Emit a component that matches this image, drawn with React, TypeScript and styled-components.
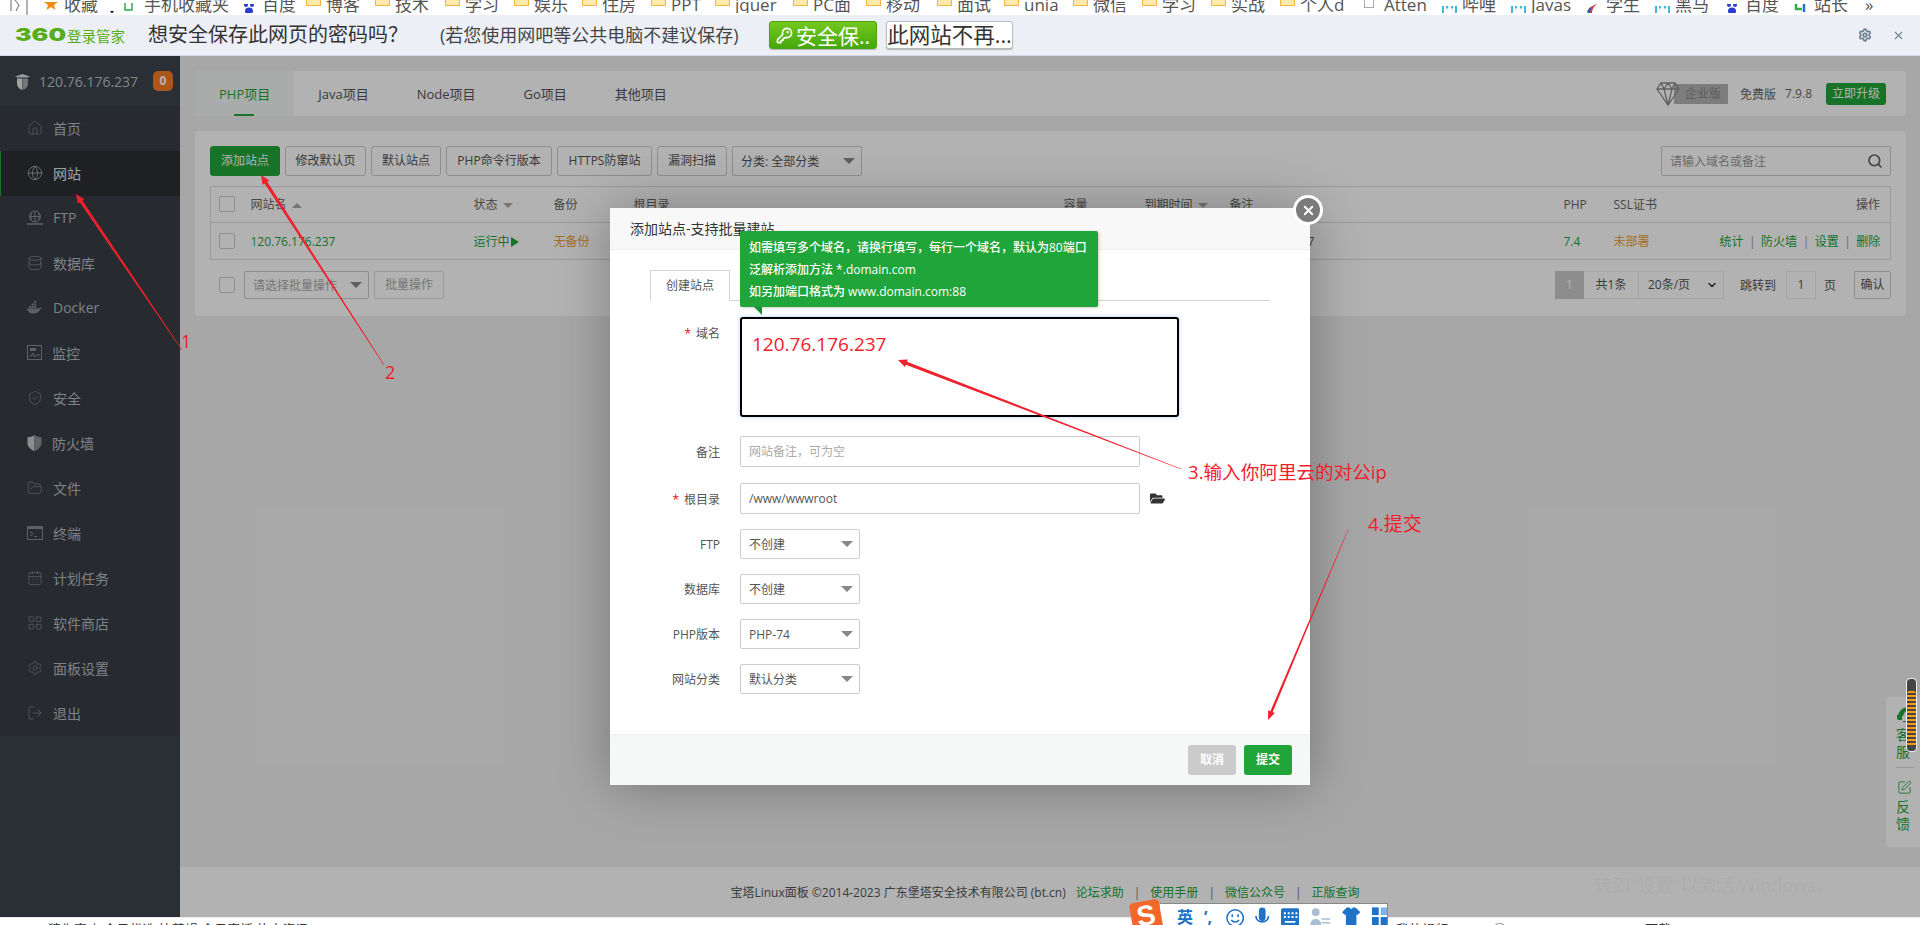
import React from "react";
import styled, { createGlobalStyle } from "styled-components";
import { Home, Globe, Database, ShieldCheck, FolderOpen, CalendarDays, LayoutGrid, Settings, LogOut, Search, X, KeyRound, ChevronDown, SquarePen } from "lucide-react";
import { FaFolderOpen } from "react-icons/fa";

const sans = `"Open Sans","Noto Sans CJK SC",sans-serif`;

const Global = createGlobalStyle`
  html, body { margin: 0; padding: 0; height: 100%; overflow: hidden; background: #fff; }
  body { font-family: ${sans}; font-size: 12px; color: #555; }
  #root { height: 925px; }
  * { box-sizing: border-box; }
`;

const Shell = styled.div`
  position: relative;
  width: 1920px;
  height: 925px;
  overflow: hidden;
  display: flex;
  flex-direction: column;
`;

/* browser chrome */
const Bookmarks = styled.div`
  height: 15px;
  flex: none;
  background: #fff;
  display: flex;
  align-items: flex-start;
  padding-left: 10px;
  overflow: hidden;
`;
const BackMark = styled.svg`
  width: 34px;
  height: 15px;
  flex: none;
`;
const Bookmark = styled.div<{ $w: number }>`
  width: ${(p) => p.$w}px;
  flex: none;
  display: flex;
  align-items: flex-start;
  overflow: hidden;
  white-space: nowrap;
  font-size: 17px;
  line-height: 17px;
  margin-top: -4px;
  color: #555;
`;
const BookmarkSlot = styled.span<{ $w?: number }>`
  width: ${(p) => p.$w ?? 20}px;
  flex: none;
  height: 17px;
  padding-top: 4px;
  display: block;
`;
const FolderGlyph = styled.span`
  display: block;
  width: 15px;
  height: 6px;
  background: #ffe9ad;
  border: 1px solid #f2b53f;
  border-top: none;
  border-radius: 0 0 1px 1px;
`;
const FileGlyph = styled.span`
  display: block;
  width: 10px;
  height: 8px;
  background: #fff;
  border: 1px solid #aaa;
  border-top: none;
`;

const InfoBar = styled.div`
  height: 41px;
  flex: none;
  background: #ecf0f6;
  border-bottom: 1px solid #d3d8e4;
  display: flex;
  align-items: center;
  padding: 0 15px;
  color: #333;
`;
const LogoNum = styled.span`
  font-family: Inter, sans-serif;
  font-weight: 900;
  font-size: 18px;
  line-height: 20px;
  color: #56ad19;
  width: 34px;
  display: inline-block;
  transform: scaleX(1.38);
  transform-origin: left center;
  flex: none;
`;
const LogoName = styled.span`
  margin-left: 18px;
  width: 81px;
  font-size: 14.5px;
  color: #56ad19;
  flex: none;
`;
const SavePrompt = styled.span`
  font-size: 20px;
  line-height: 24px;
  width: 292px;
  flex: none;
  color: #333;
`;
const SaveHint = styled.span`
  font-size: 18px;
  line-height: 24px;
  width: 329px;
  flex: none;
  color: #444;
  white-space: nowrap;
`;
const SaveButton = styled.div`
  width: 108px;
  height: 28px;
  flex: none;
  border-radius: 3px;
  background: linear-gradient(#74c81f, #45a80a);
  border: 1px solid #4da312;
  box-shadow: 0 1px 1px rgba(0, 0, 0, 0.25);
  color: #fff;
  font-size: 21px;
  display: flex;
  align-items: center;
  gap: 3px;
  padding-left: 6px;
  white-space: nowrap;
  overflow: hidden;
`;
const NeverButton = styled.div`
  margin-left: 9px;
  width: 127px;
  height: 28px;
  flex: none;
  border-radius: 3px;
  background: #fff;
  border: 1px solid #bbb;
  box-shadow: 0 1px 1px rgba(0, 0, 0, 0.25);
  color: #333;
  font-size: 21.5px;
  line-height: 25px;
  text-align: center;
  white-space: nowrap;
  overflow: hidden;
`;
const InfoTools = styled.div`
  margin-left: auto;
  display: flex;
  align-items: center;
  gap: 20px;
  color: #6f8092;
  padding-right: 0;
`;

/* page */
const Page = styled.div`
  position: relative;
  flex: 1;
  display: flex;
  min-height: 0;
`;
const Shade = styled.div`
  position: absolute;
  inset: 0;
  background: rgba(0, 0, 0, 0.3);
  z-index: 10;
`;
const Sidebar = styled.aside`
  width: 180px;
  flex: none;
  background: #3c444d;
  display: flex;
  flex-direction: column;
`;
const SideHead = styled.div`
  height: 50px;
  display: flex;
  align-items: center;
  padding-left: 14px;
  color: #b5c0c9;
  font-size: 14px;
`;
const HeadIp = styled.span`
  margin-left: 8px;
  width: 114px;
  flex: none;
`;
const Badge = styled.span`
  width: 20px;
  height: 20px;
  border-radius: 5px;
  background: #f77b25;
  color: #fff;
  font-size: 12px;
  font-weight: 700;
  line-height: 20px;
  text-align: center;
`;
const SideNav = styled.nav`
  background: #383e46;
  display: flex;
  flex-direction: column;
`;
const NavItem = styled.div<{ $active?: boolean }>`
  height: 45px;
  display: flex;
  align-items: center;
  padding: 0 0 2px 27px;
  gap: 10px;
  font-size: 14px;
  color: ${(p) => (p.$active ? "#e3e6e8" : "#b4bac0")};
  background: ${(p) => (p.$active ? "#2b2f34" : "transparent")};
  box-shadow: ${(p) => (p.$active ? "inset 1px 0 0 #20a53a" : "none")};
  svg { color: ${(p) => (p.$active ? "#b8bcc0" : "#868b90")}; flex: none; }
`;

const Main = styled.main`
  flex: 1;
  min-width: 0;
  background: #f0f0f0;
  display: flex;
  flex-direction: column;
  padding-top: 15px;
`;
const TabsCard = styled.div`
  margin: 0 14px 15px 15px;
  height: 45px;
  background: #fff;
  border-radius: 4px;
  display: flex;
  align-items: stretch;
  overflow: hidden;
  font-size: 13px;
  color: #555;
`;
const TopTab = styled.div<{ $active?: boolean }>`
  position: relative;
  padding: 0 24px;
  display: flex;
  align-items: center;
  color: ${(p) => (p.$active ? "#20a53a" : "#555")};
  background: ${(p) => (p.$active ? "#f3f7f4" : "transparent")};
  &::after {
    content: "";
    display: ${(p) => (p.$active ? "block" : "none")};
    position: absolute;
    left: 39px;
    bottom: 0;
    width: 20px;
    height: 2px;
    background: #20a53a;
  }
`;
const Edition = styled.div`
  margin-left: auto;
  display: flex;
  align-items: center;
  font-size: 12px;
  padding-right: 20px;
  color: #666;
`;
const Diamond = styled.svg`
  width: 24px;
  height: 26px;
  margin-right: -6px;
  z-index: 1;
`;
const EditionTag = styled.span`
  width: 54px;
  height: 20px;
  background: #b4b4b4;
  color: #848484;
  line-height: 20px;
  text-align: center;
  padding-left: 4px;
  margin-right: 12px;
`;
const Version = styled.span`
  margin-left: 9px;
  margin-right: 14px;
`;
const Upgrade = styled.span`
  width: 60px;
  height: 22px;
  border-radius: 3px;
  background: #20a53a;
  color: #fff;
  line-height: 22px;
  text-align: center;
`;

const Card = styled.section`
  margin: 0 14px 0 15px;
  background: #fff;
  border-radius: 4px;
  padding: 15px 15px 17px;
`;
const Toolbar = styled.div`
  display: flex;
  gap: 5px;
  height: 30px;
`;
const Btn = styled.div<{ $w: number; $primary?: boolean }>`
  width: ${(p) => p.$w}px;
  height: 30px;
  border-radius: 3px;
  border: 1px solid ${(p) => (p.$primary ? "#20a53a" : "#ccc")};
  background: ${(p) => (p.$primary ? "#20a53a" : "#fff")};
  color: ${(p) => (p.$primary ? "#fff" : "#555")};
  line-height: 28px;
  text-align: center;
  white-space: nowrap;
`;
const Caret = styled.span<{ $up?: boolean; $size?: number; $color?: string }>`
  display: inline-block;
  width: 0;
  height: 0;
  border-left: ${(p) => p.$size ?? 5}px solid transparent;
  border-right: ${(p) => p.$size ?? 5}px solid transparent;
  ${(p) => (p.$up ? "border-bottom" : "border-top")}: ${(p) => p.$size ?? 5}px solid ${(p) => p.$color ?? "#aaa"};
`;
const SelectBox = styled.div<{ $w: number; $h?: number; $muted?: boolean }>`
  width: ${(p) => p.$w}px;
  height: ${(p) => p.$h ?? 30}px;
  border: 1px solid #ccc;
  border-radius: 2px;
  background: #fff;
  color: ${(p) => (p.$muted ? "#aaa" : "#555")};
  display: flex;
  align-items: center;
  justify-content: space-between;
  padding: 0 6px 0 8px;
  white-space: nowrap;
  flex: none;
  font-size: 12px;
`;
const DarkCaret = styled(Caret).attrs({ $size: 6, $color: "#888" })``;
const SearchBox = styled.div`
  margin-left: auto;
  width: 230px;
  height: 30px;
  border: 1px solid #ccc;
  border-radius: 2px;
  display: flex;
  align-items: center;
  justify-content: space-between;
  padding: 0 7px 0 8px;
  color: #999;
  svg { color: #666; }
`;

const Table = styled.table`
  margin-top: 10px;
  width: 100%;
  table-layout: fixed;
  border-collapse: collapse;
  border: 1px solid #ddd;
  font-size: 12px;
`;
const Th = styled.th<{ $right?: boolean }>`
  height: 36px;
  padding: 0 10px 1px;
  font-weight: 400;
  color: #666;
  text-align: ${(p) => (p.$right ? "right" : "left")};
  border-bottom: 1px solid #ddd;
  white-space: nowrap;
  span { margin-left: 5px; vertical-align: middle; }
`;
const Td = styled.td<{ $tone?: "green" | "orange"; $right?: boolean }>`
  height: 37px;
  padding: 0 10px;
  white-space: nowrap;
  text-align: ${(p) => (p.$right ? "right" : "left")};
  color: ${(p) => (p.$tone === "green" ? "#20a53a" : p.$tone === "orange" ? "#ee9d35" : "#555")};
`;
const CheckCell = styled.div`
  width: 16px;
  height: 16px;
  margin-left: -2px;
  border: 1px solid #ccc;
  border-radius: 2px;
  background: #fff;
`;
const PlayMark = styled.span`
  display: inline-block;
  margin-left: 1px;
  width: 0;
  height: 0;
  border-top: 5px solid transparent;
  border-bottom: 5px solid transparent;
  border-left: 8px solid #20a53a;
  vertical-align: -1px;
`;
const Sep = styled.i`
  font-style: normal;
  color: #999;
  margin: 0 5.5px;
`;
const ActionLink = styled.span`
  color: #20a53a;
`;
const CardFoot = styled.div`
  margin-top: 11px;
  display: flex;
  align-items: center;
  height: 28px;
`;
const FootCheck = styled.div`
  width: 16px;
  height: 16px;
  margin: 0 9px 0 9px;
  border: 1px solid #ccc;
  border-radius: 2px;
  flex: none;
`;
const GhostBtn = styled.div`
  margin-left: 5px;
  width: 70px;
  height: 28px;
  border: 1px solid #ddd;
  border-radius: 2px;
  color: #aaa;
  line-height: 26px;
  text-align: center;
`;
const Pager = styled.div`
  margin-left: auto;
  display: flex;
  align-items: center;
  height: 28px;
  color: #555;
`;
const PageNum = styled.span`
  width: 29px;
  height: 28px;
  background: #cbcbcb;
  color: #fff;
  text-align: center;
  line-height: 28px;
`;
const PageCell = styled.span<{ $w: number; $spread?: boolean }>`
  width: ${(p) => p.$w}px;
  height: 28px;
  border: 1px solid #eee;
  border-left: none;
  line-height: 26px;
  display: flex;
  align-items: center;
  justify-content: ${(p) => (p.$spread ? "space-between" : "center")};
  padding: ${(p) => (p.$spread ? "0 5px 0 9px" : "0")};
  svg { color: #333; }
`;
const PageText = styled.span<{ $before: number; $after: number }>`
  margin: 0 ${(p) => p.$after}px 0 ${(p) => p.$before}px;
`;
const PageInput = styled.span`
  width: 30px;
  height: 28px;
  border: 1px solid #eee;
  text-align: center;
  line-height: 26px;
`;
const PageConfirm = styled.span`
  margin-left: 18px;
  width: 37px;
  height: 28px;
  border: 1px solid #ccc;
  border-radius: 2px;
  text-align: center;
  line-height: 26px;
`;
const PageFooter = styled.footer`
  margin-top: auto;
  height: 50px;
  background: #fff;
  display: flex;
  align-items: center;
  justify-content: center;
  font-size: 12px;
  color: #555;
  padding-right: 10px;
`;
const FootLink = styled.span`
  color: #20a53a;
  margin-left: 10px;
`;
const FootSep = styled.i`
  font-style: normal;
  color: #777;
  margin-left: 10px;
`;
const FloatPanel = styled.div`
  position: absolute;
  right: 0;
  top: 641px;
  width: 34px;
  height: 150px;
  background: #fff;
  border-radius: 4px 0 0 4px;
  color: #20a53a;
  font-size: 14px;
  line-height: 17px;
  display: flex;
  flex-direction: column;
  align-items: flex-start;
  padding: 9px 0 0 10px;
  svg { margin-left: 1px; }
`;
const FloatWord = styled.span`
  width: 14px;
  margin-top: 3px;
`;
const FloatRule = styled.div`
  width: 18px;
  height: 1px;
  background: #ddd;
  margin: 7px 0 12px 0;
`;

/* modal */
const Modal = styled.div`
  position: absolute;
  left: 610px;
  top: 152px;
  width: 700px;
  height: 577px;
  background: #fff;
  z-index: 20;
  box-shadow: 1px 1px 50px rgba(0, 0, 0, 0.3);
  display: flex;
  flex-direction: column;
`;
const ModalTitle = styled.div`
  height: 42px;
  flex: none;
  background: #f8f8f8;
  border-bottom: 1px solid #eee;
  padding-left: 20px;
  font-size: 14px;
  line-height: 42px;
  color: #333;
`;
const CloseBtn = styled.div`
  position: absolute;
  right: -13px;
  top: -13px;
  width: 30px;
  height: 30px;
  border-radius: 50%;
  background: #7b7b7b;
  border: 3px solid #fff;
  color: #fff;
  display: flex;
  align-items: center;
  justify-content: center;
`;
const TipBox = styled.div`
  position: absolute;
  left: 130px;
  top: 23px;
  width: 358px;
  height: 76px;
  background: #20a53a;
  border-radius: 2px;
  color: #fff;
  font-size: 12px;
  font-weight: 500;
  line-height: 22px;
  padding: 6px 0 0 9px;
  white-space: nowrap;
  box-shadow: 1px 1px 3px rgba(0, 0, 0, 0.2);
  z-index: 2;
  &::after {
    content: "";
    position: absolute;
    left: 14px;
    top: 76px;
    width: 8px;
    height: 8px;
    background: #1c8f33;
    clip-path: polygon(0 0, 100% 0, 100% 100%);
  }
`;
const ModalTabs = styled.div`
  margin: 20px 40px 0;
  height: 31px;
  flex: none;
  border-bottom: 1px solid #d5d3dc;
  display: flex;
`;
const ModalTab = styled.div`
  width: 80px;
  height: 31px;
  border: 1px solid #d5d3dc;
  border-bottom: none;
  background: #fff;
  text-align: center;
  line-height: 30px;
  color: #555;
`;
const Form = styled.div`
  margin-top: 16px;
  display: flex;
  flex-direction: column;
`;
const Row = styled.div<{ $mb?: number; $top?: boolean }>`
  display: flex;
  align-items: ${(p) => (p.$top ? "flex-start" : "center")};
  margin-bottom: ${(p) => p.$mb ?? 15}px;
`;
const Label = styled.label<{ $top?: boolean }>`
  width: 110px;
  flex: none;
  margin-right: 20px;
  text-align: right;
  color: #555;
  white-space: nowrap;
  padding-top: ${(p) => (p.$top ? "7px" : "0")};
`;
const Star = styled.span`
  color: #ef0808;
  margin-right: 5px;
`;
const DomainBox = styled.div`
  width: 439px;
  height: 100px;
  border: 2px solid #000;
  border-radius: 3px;
  box-shadow: 0 0 4px rgba(102, 170, 255, 0.5);
  padding: 12px 10px;
  font-size: 19px;
  line-height: 26px;
  color: #f0202c;
`;
const TextInput = styled.div<{ $muted?: boolean }>`
  width: 400px;
  height: 31px;
  border: 1px solid #ccc;
  border-radius: 2px;
  padding: 0 8px;
  line-height: 29px;
  color: ${(p) => (p.$muted ? "#aaa" : "#555")};
`;
const FolderBtn = styled.span`
  margin-left: 10px;
  color: #333;
  display: flex;
`;
const ModalFoot = styled.div`
  margin-top: auto;
  height: 51px;
  flex: none;
  background: #f6f8f8;
  border-top: 1px solid #eee;
  display: flex;
  align-items: center;
  justify-content: flex-end;
  gap: 8px;
  padding-right: 18px;
`;
const FootBtn = styled.div<{ $primary?: boolean }>`
  width: 48px;
  height: 30px;
  border-radius: 3px;
  background: ${(p) => (p.$primary ? "#20a53a" : "#cbcbcb")};
  color: #fff;
  font-weight: 700;
  line-height: 30px;
  text-align: center;
`;

/* annotations and desktop layers */
const Ink = styled.svg`
  position: absolute;
  left: 0;
  top: 0;
  width: 1920px;
  height: 925px;
  z-index: 30;
  pointer-events: none;
`;
const Note = styled.span<{ $x: number; $y: number; $size?: number }>`
  position: absolute;
  left: ${(p) => p.$x}px;
  top: ${(p) => p.$y}px;
  font-size: ${(p) => p.$size ?? 18}px;
  line-height: 24px;
  color: #f0202c;
  white-space: nowrap;
  z-index: 31;
`;
const VolumePill = styled.div`
  position: absolute;
  left: 1906px;
  top: 678px;
  width: 11px;
  height: 74px;
  border-radius: 4px;
  border: 1px solid #eee;
  z-index: 31;
  background: repeating-linear-gradient(#ff9c14 0 2px, #444 2px 4px);
  background-clip: padding-box;
  box-shadow: inset 0 12px 0 #444, inset 0 -5px 0 #444;
`;
const Watermark = styled.div`
  position: absolute;
  left: 1594px;
  top: 846px;
  z-index: 31;
  white-space: nowrap;
  font-size: 18px;
  line-height: 26px;
`;
const WatermarkTitle = styled.div`
  color: rgba(0, 0, 0, 0.02);
`;
const WatermarkHint = styled.div`
  color: rgba(0, 0, 0, 0.05);
`;
const StatusBar = styled.div`
  height: 8px;
  flex: none;
  background: #fff;
  border-top: 1px solid #eee;
  overflow: hidden;
  display: flex;
  padding: 3px 0 0 48px;
  font-size: 13px;
  line-height: 16px;
  color: #333;
`;
const StatusItem = styled.span<{ $w: number }>`
  width: ${(p) => p.$w}px;
  flex: none;
  white-space: nowrap;
`;
const Sogou = styled.div`
  position: absolute;
  left: 1130px;
  top: 900px;
  width: 258px;
  height: 25px;
  z-index: 32;
  display: flex;
`;
const SogouBar = styled.div`
  position: absolute;
  left: 30px;
  top: 3px;
  width: 228px;
  height: 22px;
  background: #fff;
  border: 1px solid #888;
  border-bottom: none;
  border-left: none;
  display: flex;
  align-items: flex-start;
  padding: 3px 0 0 17px;
  color: #1e73c8;
  gap: 11px;
`;
const SogouWord = styled.span<{ $pad?: number }>`
  font-size: 16px;
  line-height: 20px;
  font-weight: 700;
  color: #1e73c8;
  padding-right: ${(p) => p.$pad ?? 0}px;
`;
const SogouLogo = styled.div`
  position: absolute;
  left: 1px;
  top: 1px;
  width: 30px;
  height: 29px;
  background: #f4672a;
  border-radius: 4px;
  transform: rotate(-10deg);
  color: #fff;
  font-family: "Liberation Sans", sans-serif;
  font-weight: 700;
  font-size: 28px;
  line-height: 29px;
  text-align: center;
  z-index: 1;
`;

/* drawings */
const FtpIcon = () => (
  <svg width="16" height="16" viewBox="0 0 16 16" fill="none" stroke="currentColor" strokeWidth="1">
    <circle cx="8" cy="6.5" r="5.5" />
    <path d="M2.5 6.5h11M8 1v11M4.8 2.4c-1.2 2.4-1.2 5.8 0 8.2M11.2 2.4c1.2 2.4 1.2 5.8 0 8.2" />
    <path d="M0 14h16M6 14h4" strokeWidth="1.4" />
  </svg>
);
const DockerIcon = () => (
  <svg width="16" height="16" viewBox="0 0 16 16" fill="currentColor">
    <path d="M0 8.5h12c.6-1 1.8-1.3 3-.9-.4 1-1 1.5-2 1.6-1 3-3.600 4.300-6.600 4.300C2.500 13.500.4 11.500 0 8.500z" />
    <path d="M2 6h2v2H2zM4.600 6h2v2h-2zM7.200 6h2v2h-2zM4.600 3.400h2v2h-2zM7.200 3.400h2v2h-2zM7.200.8h2v2h-2z" />
  </svg>
);
const MonitorIcon = () => (
  <svg width="15" height="15" viewBox="0 0 15 15" fill="none" stroke="currentColor" strokeWidth="1">
    <rect x=".5" y=".5" width="14" height="14" />
    <path d="M2 11h2.500l1.500-3 1.500 4 1.500-2h4" />
    <rect x="3" y="3" width="6" height="3" fill="currentColor" stroke="none" />
  </svg>
);
const HalfShield = () => (
  <svg width="15" height="16" viewBox="0 0 15 16">
    <path d="M7.500 0C5.500 1.500 3 2.200.5 2.200v6c0 3.500 3 6.200 7 7.800z" fill="#c8cbcd" />
    <path d="M7.500 0c2 1.500 4.500 2.200 7 2.200v6c0 3.500-3 6.200-7 7.800z" fill="#8b8f92" />
  </svg>
);
const TerminalIcon = () => (
  <svg width="16" height="14" viewBox="0 0 16 14" fill="none" stroke="currentColor">
    <rect x=".5" y=".5" width="15" height="13" />
    <rect x="1" y="1" width="14" height="2" fill="currentColor" stroke="none" />
    <path d="M3 5.500l3 2.200-3 2.200M7 10.500h3" />
  </svg>
);
const TowerIcon = () => (
  <svg width="17" height="18" viewBox="0 0 17 18">
    <path d="M8.500 0v2L1 4.500l2.500 1h10l2.500-1L8.500 2z" fill="#d9dde0" />
    <path d="M3 6.500h5.300V18C5 17 3 14.500 3 11.500z" fill="#e6e8ea" />
    <path d="M8.700 6.500H14v5c0 3-2 5.500-5.300 6.500z" fill="#a4a9ad" />
  </svg>
);
const Star5 = () => (
  <svg width="14" height="13" viewBox="0 0 14 13" fill="#f08a12"><path d="M7-6l2 6h5l-4 3 1.500 5L7 5 2.500 8 4 3 0 0h5z" /></svg>
);
const TickGlyph = () => (
  <svg width="4" height="8" viewBox="0 0 4 8" fill="#222"><path d="M0 4h4L2 7z" /></svg>
);
const PhoneGlyph = () => (
  <svg width="10" height="12" viewBox="0 0 10 12" fill="none" stroke="#2faa4d" strokeWidth="1.500"><path d="M1-4v11h7V-4" /></svg>
);
const PawGlyph = () => (
  <svg width="14" height="11" viewBox="0 0 14 11" fill="#2b3bd0"><circle cx="4" cy="1" r="2" /><circle cx="10" cy="1" r="2" /><ellipse cx="7" cy="7" rx="4" ry="3.500" /></svg>
);
const BiliGlyph = () => (
  <svg width="15" height="9" viewBox="0 0 15 9" fill="none" stroke="#00a1d6" strokeWidth="1.500"><path d="M1-3v9.500c0 .8.500 1.500 1.500 1.500h10c1 0 1.500-.7 1.500-1.500V-3" /><path d="M5 0v2.500M10 0v2.500" /></svg>
);
const XueGlyph = () => (
  <svg width="12" height="11" viewBox="0 0 12 11"><path d="M3 10C3 5 6 1 11 0 7 3 6 6 6 10z" fill="#d43b3b" /><path d="M1 8c1-3 3-5 5-6-1 2-2 5-2 8z" fill="#2b55b8" /></svg>
);
const ZhanGlyph = () => (
  <svg width="13" height="11" viewBox="0 0 13 11" fill="none" strokeWidth="2.500"><path d="M2-2v7h6" stroke="#2faa4d" /><path d="M10-2v10" stroke="#2b6fd0" /></svg>
);
const DiamondIcon = () => (
  <Diamond viewBox="0 0 24 26" fill="none" stroke="#8c8c8c" strokeWidth="1.300">
    <path d="M5 2h14l4 6-11 16L1 8zM1 8h22M8 8l4 16 4-16M5 2l3 6 4-6 4 6 3-6" />
  </Diamond>
);
const HeadsetIcon = () => (
  <svg width="18" height="17" viewBox="0 0 18 17" fill="currentColor">
    <path d="M1 11C1 5 6 1 12 1c2 0 4 .5 5 1.500C12 2 7 5 6 10z" />
    <path d="M0 9h5v5H2c-1 0-2-1-2-2zM6 15h8v1H6z" />
  </svg>
);
const SmileGlyph = () => (
  <svg width="19" height="22" viewBox="0 0 19 22" fill="none" stroke="currentColor" strokeWidth="1.600"><circle cx="9.500" cy="11" r="8.500" /><path d="M6.500 7v3M12.500 7v3M5.500 13c2 3 6 3 8 0" /></svg>
);
const MicGlyph = () => (
  <svg width="15" height="22" viewBox="0 0 15 22" fill="currentColor"><rect x="4" y="0" width="7" height="14" rx="3.500" /><path d="M1 9c0 8 13 8 13 0" fill="none" stroke="currentColor" strokeWidth="1.800" /></svg>
);
const KeysGlyph = () => (
  <svg width="19" height="22" viewBox="0 0 19 22" fill="currentColor"><rect y="1" width="19" height="20" rx="2" /><path d="M3 5h2v2H3zM7 5h2v2H7zM11 5h2v2h-2zM15 5h2v2h-2zM3 9h2v2H3zM7 9h2v2H7zM11 9h2v2h-2zM15 9h2v2h-2zM4 14h11v2H4z" fill="#fff" /></svg>
);
const PersonGlyph = () => (
  <svg width="22" height="22" viewBox="0 0 22 22"><circle cx="6" cy="5" r="4" fill="#a9bdd3" /><path d="M0 22c0-7 2-10 6-10s6 3 6 10z" fill="#a9bdd3" /><path d="M12 12h9M12 16h9M12 20h9" stroke="#a9bdd3" strokeWidth="1.500" /></svg>
);
const ShirtGlyph = () => (
  <svg width="19" height="22" viewBox="0 0 19 22" fill="currentColor"><path d="M5 0h3c0 2 3 2 3 0h3l5 5-3 3-1-1v15H4V7L3 8 0 5z" /></svg>
);
const GridGlyph = () => (
  <svg width="16" height="22" viewBox="0 0 16 22" fill="currentColor"><rect width="7" height="8" /><rect x="9" width="7" height="8" fill="#7fb2e6" /><rect y="10" width="7" height="12" /><rect x="9" y="10" width="7" height="12" /></svg>
);

function Arrow({ a, b, w = 3.2 }: { a: [number, number]; b: [number, number]; w?: number }) {
  const dx = b[0] - a[0];
  const dy = b[1] - a[1];
  const len = Math.hypot(dx, dy);
  const ux = dx / len;
  const uy = dy / len;
  const nx = -uy;
  const ny = ux;
  const headLen = 9;
  const neck: [number, number] = [b[0] - ux * headLen, b[1] - uy * headLen];
  const p = (x: number, y: number, s: number) => `${x + nx * s},${y + ny * s}`;
  const points = [
    p(a[0], a[1], 0.25),
    p(neck[0], neck[1], w / 2),
    p(neck[0], neck[1], w / 2 + 2.4),
    `${b[0]},${b[1]}`,
    p(neck[0], neck[1], -(w / 2 + 2.4)),
    p(neck[0], neck[1], -w / 2),
    p(a[0], a[1], -0.25),
  ].join(" ");
  return <polygon points={points} fill="#f0202c" />;
}

type Mark = "star" | "tick" | "phone" | "paw" | "folder" | "file" | "bili" | "xue" | "zhan" | "none";
const marks: Record<Mark, React.ReactNode> = {
  star: <Star5 />,
  tick: <TickGlyph />,
  phone: <PhoneGlyph />,
  paw: <PawGlyph />,
  folder: <FolderGlyph />,
  file: <FileGlyph />,
  bili: <BiliGlyph />,
  xue: <XueGlyph />,
  zhan: <ZhanGlyph />,
  none: null,
};
const bookmarks: { x: number; mark: Mark; label: string }[] = [
  { x: 44, mark: "star", label: "收藏" },
  { x: 110, mark: "tick", label: "" },
  { x: 124, mark: "phone", label: "手机收藏夹" },
  { x: 242, mark: "paw", label: "百度" },
  { x: 306, mark: "folder", label: "博客" },
  { x: 375, mark: "folder", label: "技术" },
  { x: 445, mark: "folder", label: "学习" },
  { x: 514, mark: "folder", label: "娱乐" },
  { x: 582, mark: "folder", label: "住房" },
  { x: 651, mark: "folder", label: "PPT" },
  { x: 715, mark: "folder", label: "jquer" },
  { x: 793, mark: "folder", label: "PC面" },
  { x: 866, mark: "folder", label: "移动" },
  { x: 937, mark: "folder", label: "面试" },
  { x: 1004, mark: "folder", label: "unia" },
  { x: 1073, mark: "folder", label: "微信" },
  { x: 1142, mark: "folder", label: "学习" },
  { x: 1211, mark: "folder", label: "实战" },
  { x: 1280, mark: "folder", label: "个人d" },
  { x: 1364, mark: "file", label: "Atten" },
  { x: 1442, mark: "bili", label: "哔哩" },
  { x: 1511, mark: "bili", label: "Javas" },
  { x: 1586, mark: "xue", label: "学生" },
  { x: 1655, mark: "bili", label: "黑马" },
  { x: 1725, mark: "paw", label: "百度" },
  { x: 1794, mark: "zhan", label: "站长" },
  { x: 1865, mark: "none", label: "»" },
];

const navs: { label: string; icon: React.ReactNode; active?: boolean }[] = [
  { label: "首页", icon: <Home size={16} strokeWidth={1} /> },
  { label: "网站", icon: <Globe size={16} strokeWidth={1.1} />, active: true },
  { label: "FTP", icon: <FtpIcon /> },
  { label: "数据库", icon: <Database size={16} strokeWidth={1.2} /> },
  { label: "Docker", icon: <DockerIcon /> },
  { label: "监控", icon: <MonitorIcon /> },
  { label: "安全", icon: <ShieldCheck size={16} strokeWidth={1.1} /> },
  { label: "防火墙", icon: <HalfShield /> },
  { label: "文件", icon: <FolderOpen size={16} strokeWidth={1.1} /> },
  { label: "终端", icon: <TerminalIcon /> },
  { label: "计划任务", icon: <CalendarDays size={16} strokeWidth={1.1} /> },
  { label: "软件商店", icon: <LayoutGrid size={16} strokeWidth={1.1} /> },
  { label: "面板设置", icon: <Settings size={16} strokeWidth={1} /> },
  { label: "退出", icon: <LogOut size={16} strokeWidth={1.1} /> },
];

const tools: { label: string; w: number; primary?: boolean }[] = [
  { label: "添加站点", w: 70, primary: true },
  { label: "修改默认页", w: 81 },
  { label: "默认站点", w: 70 },
  { label: "PHP命令行版本", w: 106 },
  { label: "HTTPS防窜站", w: 95 },
  { label: "漏洞扫描", w: 70 },
];

export default function App() {
  return (
    <Shell>
      <Global />
      <Bookmarks>
        <BackMark viewBox="0 0 34 15" fill="none" stroke="#666">
          <path d="M1 0v11M5 0l4 5-3 6M17 0v15" />
        </BackMark>
        {bookmarks.map((b, i) => {
          const next = i + 1 < bookmarks.length ? bookmarks[i + 1].x : 1910;
          return (
            <Bookmark key={b.x} $w={next - b.x}>
              {b.mark !== "none" && <BookmarkSlot $w={b.mark === "tick" ? 8 : 20}>{marks[b.mark]}</BookmarkSlot>}
              {b.label}
            </Bookmark>
          );
        })}
      </Bookmarks>
      <InfoBar>
        <LogoNum>360</LogoNum>
        <LogoName>登录管家</LogoName>
        <SavePrompt>想安全保存此网页的密码吗？</SavePrompt>
        <SaveHint>(若您使用网吧等公共电脑不建议保存)</SaveHint>
        <SaveButton>
          <KeyRound size={17} strokeWidth={2.4} />
          安全保..
        </SaveButton>
        <NeverButton>此网站不再...</NeverButton>
        <InfoTools>
          <Settings size={14} strokeWidth={3} />
          <X size={13} strokeWidth={2} />
        </InfoTools>
      </InfoBar>
      <Page>
        <Sidebar>
          <SideHead>
            <TowerIcon />
            <HeadIp>120.76.176.237</HeadIp>
            <Badge>0</Badge>
          </SideHead>
          <SideNav>
            {navs.map((n) => (
              <NavItem key={n.label} $active={n.active}>
                {n.icon}
                {n.label}
              </NavItem>
            ))}
          </SideNav>
        </Sidebar>
        <Main>
          <TabsCard>
            <TopTab $active>PHP项目</TopTab>
            <TopTab>Java项目</TopTab>
            <TopTab>Node项目</TopTab>
            <TopTab>Go项目</TopTab>
            <TopTab>其他项目</TopTab>
            <Edition>
              <DiamondIcon />
              <EditionTag>企业版</EditionTag>
              免费版
              <Version>7.9.8</Version>
              <Upgrade>立即升级</Upgrade>
            </Edition>
          </TabsCard>
          <Card>
            <Toolbar>
              {tools.map((t) => (
                <Btn key={t.label} $w={t.w} $primary={t.primary}>
                  {t.label}
                </Btn>
              ))}
              <SelectBox $w={130}>
                分类: 全部分类
                <DarkCaret />
              </SelectBox>
              <SearchBox>
                请输入域名或备注
                <Search size={16} strokeWidth={2.6} />
              </SearchBox>
            </Toolbar>
            <Table>
              <colgroup>
                <col width={30} />
                <col width={223} />
                <col width={80} />
                <col width={80} />
                <col width={430} />
                <col width={81} />
                <col width={85} />
                <col width={334} />
                <col width={50} />
                <col width={106} />
                <col />
              </colgroup>
              <thead>
                <tr>
                  <Th><CheckCell /></Th>
                  <Th>网站名<Caret $up /></Th>
                  <Th>状态<Caret /></Th>
                  <Th>备份</Th>
                  <Th>根目录</Th>
                  <Th>容量</Th>
                  <Th>到期时间<Caret /></Th>
                  <Th>备注</Th>
                  <Th>PHP</Th>
                  <Th>SSL证书</Th>
                  <Th $right>操作</Th>
                </tr>
              </thead>
              <tbody>
                <tr>
                  <Td><CheckCell /></Td>
                  <Td $tone="green">120.76.176.237</Td>
                  <Td $tone="green">运行中<PlayMark /></Td>
                  <Td $tone="orange">无备份</Td>
                  <Td>/www/wwwroot</Td>
                  <Td>未配置</Td>
                  <Td>永久</Td>
                  <Td>120.76.176.237</Td>
                  <Td $tone="green">7.4</Td>
                  <Td $tone="orange">未部署</Td>
                  <Td $right>
                    <ActionLink>统计</ActionLink><Sep>|</Sep>
                    <ActionLink>防火墙</ActionLink><Sep>|</Sep>
                    <ActionLink>设置</ActionLink><Sep>|</Sep>
                    <ActionLink>删除</ActionLink>
                  </Td>
                </tr>
              </tbody>
            </Table>
            <CardFoot>
              <FootCheck />
              <SelectBox $w={125} $h={28} $muted>
                请选择批量操作
                <DarkCaret />
              </SelectBox>
              <GhostBtn>批量操作</GhostBtn>
              <Pager>
                <PageNum>1</PageNum>
                <PageCell $w={55}>共1条</PageCell>
                <PageCell $w={85} $spread>
                  20条/页
                  <ChevronDown size={12} strokeWidth={3} />
                </PageCell>
                <PageText $before={16} $after={10}>跳转到</PageText>
                <PageInput>1</PageInput>
                <PageText $before={8} $after={0}>页</PageText>
                <PageConfirm>确认</PageConfirm>
              </Pager>
            </CardFoot>
          </Card>
          <PageFooter>
            宝塔Linux面板 ©2014-2023 广东堡塔安全技术有限公司 (bt.cn)
            <FootLink>论坛求助</FootLink><FootSep>|</FootSep>
            <FootLink>使用手册</FootLink><FootSep>|</FootSep>
            <FootLink>微信公众号</FootLink><FootSep>|</FootSep>
            <FootLink>正版查询</FootLink>
          </PageFooter>
          <FloatPanel>
            <HeadsetIcon />
            <FloatWord>客服</FloatWord>
            <FloatRule />
            <SquarePen size={15} strokeWidth={1.4} />
            <FloatWord>反馈</FloatWord>
          </FloatPanel>
        </Main>
        <Shade />
        <Modal>
          <ModalTitle>添加站点-支持批量建站</ModalTitle>
          <CloseBtn><X size={15} strokeWidth={3} /></CloseBtn>
          <TipBox>
            <div>如需填写多个域名，请换行填写，每行一个域名，默认为80端口</div>
            <div>泛解析添加方法 *.domain.com</div>
            <div>如另加端口格式为 www.domain.com:88</div>
          </TipBox>
          <ModalTabs>
            <ModalTab>创建站点</ModalTab>
          </ModalTabs>
          <Form>
            <Row $top $mb={19}>
              <Label $top><Star>*</Star>域名</Label>
              <DomainBox>120.76.176.237</DomainBox>
            </Row>
            <Row $mb={16}>
              <Label>备注</Label>
              <TextInput $muted>网站备注，可为空</TextInput>
            </Row>
            <Row>
              <Label><Star>*</Star>根目录</Label>
              <TextInput>/www/wwwroot</TextInput>
              <FolderBtn><FaFolderOpen size={15} /></FolderBtn>
            </Row>
            <Row>
              <Label>FTP</Label>
              <SelectBox $w={120}>不创建<DarkCaret /></SelectBox>
            </Row>
            <Row>
              <Label>数据库</Label>
              <SelectBox $w={120}>不创建<DarkCaret /></SelectBox>
            </Row>
            <Row>
              <Label>PHP版本</Label>
              <SelectBox $w={120}>PHP-74<DarkCaret /></SelectBox>
            </Row>
            <Row>
              <Label>网站分类</Label>
              <SelectBox $w={120}>默认分类<DarkCaret /></SelectBox>
            </Row>
          </Form>
          <ModalFoot>
            <FootBtn>取消</FootBtn>
            <FootBtn $primary>提交</FootBtn>
          </ModalFoot>
        </Modal>
      </Page>
      <StatusBar>
        <StatusItem $w={1348}>猜你喜欢 今日优选 快剪辑 今日直播 热点资讯</StatusItem>
        <StatusItem $w={97}>我的视频</StatusItem>
        <StatusItem $w={152}>○</StatusItem>
        <StatusItem $w={212}>下载</StatusItem>
        <StatusItem $w={50}>100%</StatusItem>
      </StatusBar>
      <Ink viewBox="0 0 1920 925">
        <Arrow a={[182, 350]} b={[76, 194]} />
        <Arrow a={[384, 365]} b={[261, 175]} />
        <Arrow a={[1181, 469]} b={[898, 360]} />
        <Arrow a={[1348, 530]} b={[1268, 720]} w={2.4} />
      </Ink>
      <Note $x={181} $y={329}>1</Note>
      <Note $x={385} $y={360}>2</Note>
      <Note $x={1188} $y={460} $size={18.6}>3.输入你阿里云的对公ip</Note>
      <Note $x={1368} $y={512} $size={19}>4.提交</Note>
      <VolumePill />
      <Watermark>
        <WatermarkTitle>激活 Windows</WatermarkTitle>
        <WatermarkHint>转到"设置"以激活 Windows。</WatermarkHint>
      </Watermark>
      <Sogou>
        <SogouLogo>S</SogouLogo>
        <SogouBar>
          <SogouWord>英</SogouWord>
          <SogouWord $pad={3}>’,</SogouWord>
          <SmileGlyph />
          <MicGlyph />
          <KeysGlyph />
          <PersonGlyph />
          <ShirtGlyph />
          <GridGlyph />
        </SogouBar>
      </Sogou>
    </Shell>
  );
}
